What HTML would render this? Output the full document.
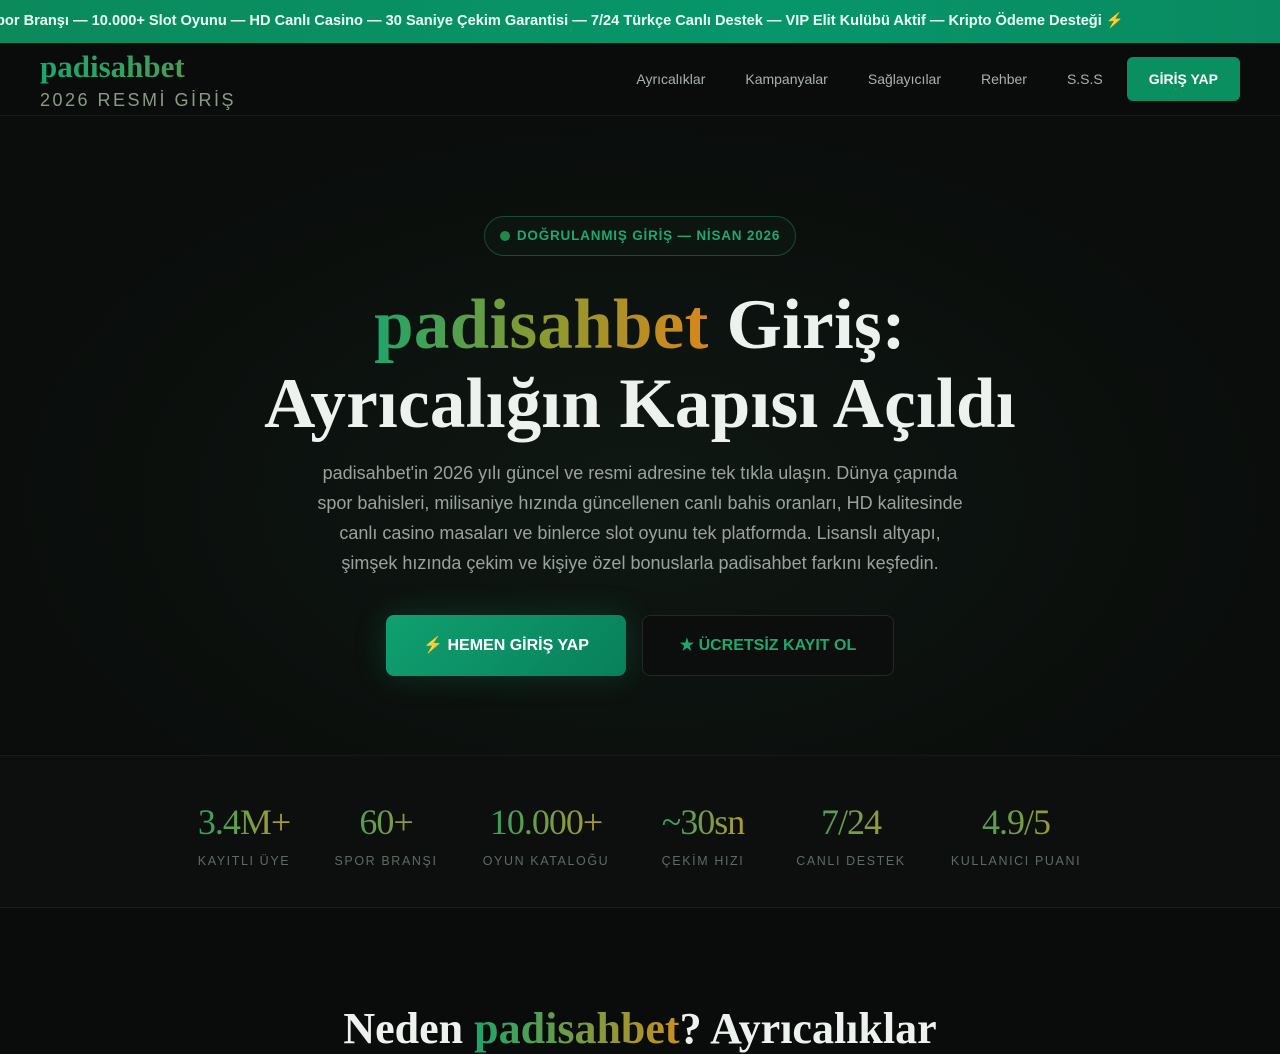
<!DOCTYPE html>
<html><head><meta charset="utf-8"><style>
*{margin:0;padding:0;box-sizing:border-box}
body{width:1280px;height:1024px;overflow:hidden;background:#0a0c0b;font-family:"Liberation Sans",sans-serif;color:#e8ede9}
.tick{height:43px;background:linear-gradient(90deg,#0b8a5c,#06966a 60%,#0a8a60);color:#e9fff4;font-weight:bold;font-size:14.6px;line-height:42px;white-space:nowrap;overflow:hidden}
.tick span{margin-left:-4px}
header{height:73px;border-bottom:1px solid #151a17;background:#0a0c0b;position:relative}
.logo{position:absolute;left:40px;top:6px;font-family:"Liberation Serif",serif;font-weight:bold;font-size:31px;background:linear-gradient(90deg,#17a86f,#4a9a55);-webkit-background-clip:text;color:transparent}
.sub{position:absolute;left:40px;top:47px;font-size:18px;letter-spacing:2.5px;color:#8a9a86}
nav{position:absolute;right:40px;top:14px;display:flex;align-items:center}
nav a{color:#a8b2aa;font-size:14px;margin-right:40px;text-decoration:none}
nav a.btn{margin-right:0;background:#0a8f60;color:#fff;font-weight:bold;padding:14px 22px;border-radius:6px;font-size:14px}
.hero{height:640px;background:radial-gradient(ellipse at 50% 60%,#0f1813 0,#0a0d0b 70%);position:relative;text-align:center;border-bottom:1px solid #161b18}
.badge{position:absolute;left:484px;top:100px;width:312px;height:40px;border:1px solid #1c4a34;border-radius:20px;background:#0c1510;color:#1ea86e;font-size:13.5px;font-weight:bold;letter-spacing:0.8px;line-height:38px}
.badge i{display:inline-block;width:10px;height:10px;border-radius:50%;background:#1e8a4a;margin-right:7px;vertical-align:-1px}
h1{position:absolute;left:0;right:0;top:170px;font-family:"Liberation Serif",serif;font-weight:bold;font-size:71px;line-height:79px;color:#eef2ee;letter-spacing:0.3px}
h1 .g{background:linear-gradient(90deg,#1fa56a,#8a9a30 50%,#d8861a);-webkit-background-clip:text;color:transparent}
p.lead{position:absolute;left:200px;width:880px;top:342px;font-size:18px;line-height:30px;color:#9aa29c}
.b1{position:absolute;left:386px;top:499px;width:240px;height:61px;border-radius:8px;background:linear-gradient(135deg,#10a070,#08805a);color:#fff;font-weight:bold;font-size:16px;line-height:61px;box-shadow:0 0 30px rgba(16,160,112,.25)}
.b2{position:absolute;left:642px;top:499px;width:252px;height:61px;border-radius:8px;border:1px solid #1f2a24;color:#1ea86e;font-weight:bold;font-size:16px;line-height:59px;background:#0b0e0c}
.stats{height:152px;background:#0c0f0d;border-bottom:1px solid #171c19;position:relative}
.st{position:absolute;top:44px;text-align:center;transform:translateX(-50%);white-space:nowrap}
.st b{display:block;font-family:"Liberation Serif",serif;font-weight:normal;font-size:36px;line-height:44px;background:linear-gradient(90deg,#2ea064,#b59a2a);-webkit-background-clip:text;color:transparent;letter-spacing:-1px}
.st s{display:block;text-decoration:none;font-size:12.5px;letter-spacing:1.6px;color:#5e6b62;margin-top:10px}
h2{position:absolute;top:1003px;left:0;right:0;text-align:center;font-family:"Liberation Serif",serif;font-weight:bold;font-size:44px;color:#eef2ee}
h2 .g{background:linear-gradient(90deg,#1fa56a,#c8901f);-webkit-background-clip:text;color:transparent}
</style></head><body>
<div class="tick"><span>por Branşı — 10.000+ Slot Oyunu — HD Canlı Casino — 30 Saniye Çekim Garantisi — 7/24 Türkçe Canlı Destek — VIP Elit Kulübü Aktif — Kripto Ödeme Desteği ⚡</span></div>
<header><div class="logo">padisahbet</div><div class="sub">2026 RESMİ GİRİŞ</div>
<nav><a>Ayrıcalıklar</a><a>Kampanyalar</a><a>Sağlayıcılar</a><a>Rehber</a><a style="margin-right:24px">S.S.S</a><a class="btn">GİRİŞ YAP</a></nav></header>
<div class="hero">
<div class="badge"><i></i>DOĞRULANMIŞ GİRİŞ — NİSAN 2026</div>
<h1><span class="g">padisahbet</span> Giriş:<br>Ayrıcalığın Kapısı Açıldı</h1>
<p class="lead">padisahbet'in 2026 yılı güncel ve resmi adresine tek tıkla ulaşın. Dünya çapında<br>spor bahisleri, milisaniye hızında güncellenen canlı bahis oranları, HD kalitesinde<br>canlı casino masaları ve binlerce slot oyunu tek platformda. Lisanslı altyapı,<br>şimşek hızında çekim ve kişiye özel bonuslarla padisahbet farkını keşfedin.</p>
<div class="b1"><span style="color:#f5b020">⚡</span> HEMEN GİRİŞ YAP</div>
<div class="b2">★ ÜCRETSİZ KAYIT OL</div>
</div>
<div class="stats">
<div class="st" style="left:244px"><b>3.4M+</b><s>KAYITLI ÜYE</s></div>
<div class="st" style="left:386px"><b>60+</b><s>SPOR BRANŞI</s></div>
<div class="st" style="left:546px"><b>10.000+</b><s>OYUN KATALOĞU</s></div>
<div class="st" style="left:703px"><b>~30sn</b><s>ÇEKİM HIZI</s></div>
<div class="st" style="left:851px"><b>7/24</b><s>CANLI DESTEK</s></div>
<div class="st" style="left:1016px"><b>4.9/5</b><s>KULLANICI PUANI</s></div>
</div>
<h2>Neden <span class="g">padisahbet</span>? Ayrıcalıklar</h2>
</body></html>
